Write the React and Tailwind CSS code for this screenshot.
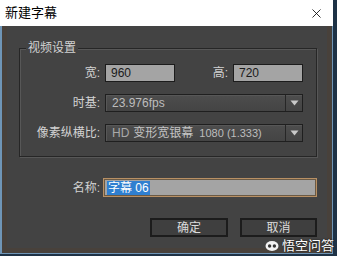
import { X } from 'lucide-react'

// 新建字幕 对话框：深色客户区 + 白色标题栏
const cjk = "font-['Liberation_Sans','Noto_Sans_CJK_SC',sans-serif]"

function Select({ children }) {
  return (
    <div className="flex h-[18px] w-[198px] items-stretch border border-[#1f1f1f] bg-gradient-to-b from-[#4d4d4d] to-[#444444] shadow-[inset_1px_1px_0_#575757]">
      <div className="flex flex-1 items-center pl-[6px] text-[12px] leading-none text-[#bdbdbd]">
        {children}
      </div>
      <div className="flex w-[17px] items-center justify-center border-l border-[#262626]">
        <svg width="9" height="6" viewBox="0 0 9 6">
          <path d="M0.5 0.5 L8.5 0.5 L4.5 5.5 Z" fill="#c9c9c9" />
        </svg>
      </div>
    </div>
  )
}

function Field({ value, width = 'w-[70px]' }) {
  return (
    <div className={`flex h-[18px] ${width} items-center border border-[#1c1c1c] bg-[#a4a4a4] pl-[5px] text-[12px] leading-none text-[#1a1a1a]`}>
      {value}
    </div>
  )
}

export default function App() {
  return (
    <div className={`relative flex h-[256px] w-[337px] bg-[#1e3246] ${cjk}`}>
      <div className="flex h-[254px] w-[333px] flex-col">
        <div className="flex h-[26px] items-center justify-between bg-white pl-[5px] pr-[9px]">
          <span className="text-[13px] text-black">新建字幕</span>
          <X size={15} strokeWidth={1.3} className="text-black" />
        </div>

        <div className="flex-1 border-b border-l-2 border-r border-[#6f95b6] bg-[#434343] pl-[17px] pt-[22px] shadow-[inset_5px_0_0_#48413b,inset_0_-5px_0_#48413b,inset_-5px_0_0_#48413b]">
          {/* 视频设置 分组 */}
          <div className="relative h-[109px] w-[298px] border border-[#262626] pt-[15px] shadow-[inset_1px_1px_0_#575757,1px_1px_0_#575757]">
            <span className="absolute left-[6px] top-[-9px] bg-[#434343] px-[2px] text-[12px] leading-[16px] text-[#d2d2d2]">
              视频设置
            </span>

            <div className="flex items-center">
              <span className="w-[83px] pr-[3px] text-right text-[12px] text-[#d2d2d2]">宽:</span>
              <div className="ml-[2px]">
                <Field value="960" />
              </div>
              <span className="w-[56px] pr-[3px] text-right text-[12px] text-[#d2d2d2]">高:</span>
              <div className="ml-[2px]">
                <Field value="720" />
              </div>
            </div>

            <div className="mt-[12px] flex items-center">
              <span className="w-[83px] pr-[3px] text-right text-[12px] text-[#d2d2d2]">时基:</span>
              <div className="ml-[2px]">
                <Select>23.976fps</Select>
              </div>
            </div>

            <div className="mt-[12px] flex items-center">
              <span className="w-[83px] pr-[3px] text-right text-[12px] text-[#d2d2d2]">像素纵横比:</span>
              <div className="ml-[2px]">
                <Select>
                  <span className="text-[#a9a9a9]">HD</span>
                  <span className="ml-[4px] text-[12px] text-[#c4c4c4]">变形宽银幕</span>
                  <span className="ml-[6px] text-[11px]">1080 (1.333)</span>
                </Select>
              </div>
            </div>
          </div>

          {/* 名称 */}
          <div className="mt-[21px] flex items-center">
            <span className="w-[84px] pr-[3px] text-right text-[12px] text-[#d2d2d2]">名称:</span>
            <div className="flex h-[19px] w-[214px] items-center border border-[#b89064] bg-[#a4a4a4] pl-[3px] shadow-[inset_0_0_0_1px_#6b5a45]">
              <span className="bg-[#2f7fd0] px-[1px] text-[12px] leading-[14px] text-white">字幕 06</span>
            </div>
          </div>

          {/* 按钮 */}
          <div className="ml-[131px] mt-[21px] flex gap-[12px]">
            <button className="h-[19px] w-[78px] border-2 border-[#1c1c1c] bg-[#3f3f3f] text-[12px] leading-none text-[#dcdcdc]">
              确定
            </button>
            <button className="h-[19px] w-[77px] border-2 border-[#1c1c1c] bg-[#3f3f3f] text-[12px] leading-none text-[#dcdcdc]">
              取消
            </button>
          </div>
        </div>
      </div>

      {/* 水印 */}
      <div className="absolute bottom-[4px] right-[3px] flex items-center gap-[3px] text-[13px] leading-none text-white [text-shadow:0_0_2px_rgba(0,0,0,0.8)]">
        <svg width="14" height="12" viewBox="0 0 14 12">
          <ellipse cx="7" cy="6" rx="6.5" ry="5" fill="#f2f2f2" />
          <circle cx="4.6" cy="6" r="1.7" fill="#333" />
          <circle cx="9.4" cy="6" r="1.7" fill="#333" />
        </svg>
        <span>悟空问答</span>
      </div>
    </div>
  )
}
